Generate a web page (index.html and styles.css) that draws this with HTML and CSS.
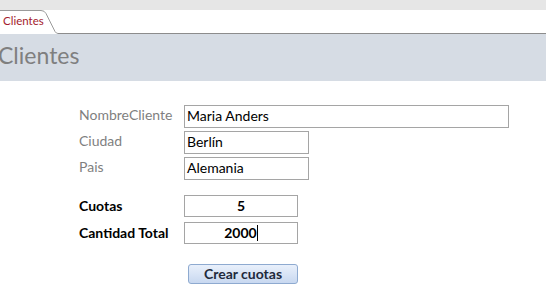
FILE: index.html
```html
<!DOCTYPE html>
<html lang="es">
<head>
    <meta charset="UTF-8">
    <title>Clientes</title>
    <link rel="stylesheet" href="styles.css">
</head>
<body>
    <div class="topbar"></div>

    <div class="tabstrip">
        <div class="tab">
            <svg class="tab-shape" width="58" height="24" viewBox="0 0 58 24">
                <path d="M0 0.5 H41 Q44.5 0.5 46 3.5 L55 21.5 Q56.3 23.5 58 23.5" fill="#fff" stroke="#9a9a9a" stroke-width="1"/>
            </svg>
            <span class="tab-label">Clientes</span>
        </div>
        <div class="tab-rest"></div>
    </div>

    <!-- Form header -->
    <div class="header">
        <h1>Clientes</h1>
    </div>

    <div class="form">
        <div class="row">
            <label class="lbl">NombreCliente</label>
            <div class="field wide">Maria Anders</div>
        </div>
        <div class="row">
            <label class="lbl">Ciudad</label>
            <div class="field mid">Berlín</div>
        </div>
        <div class="row">
            <label class="lbl">Pais</label>
            <div class="field mid">Alemania</div>
        </div>

        <div class="row num first">
            <label class="lbl bold">Cuotas</label>
            <div class="field small center">5</div>
        </div>
        <div class="row num">
            <label class="lbl bold">Cantidad Total</label>
            <div class="field small center">2000<span class="caret"></span></div>
        </div>

        <div class="actions">
            <button class="btn">Crear cuotas</button>
        </div>
    </div>
</body>
</html>
```

FILE: styles.css
```css
body {
    margin: 0;
    font-family: Lato, "Open Sans", sans-serif;
    background: #fff;
    overflow: hidden;
}
.topbar {
    height: 10px;
    background-color: #e6e6e6;
}
.tabstrip {
    display: flex;
    height: 24px;
}
.tab {
    position: relative;
    width: 58px;
    flex: none;
}
.tab-shape {
    position: absolute;
    left: 0;
    top: 0;
}
.tab-label {
    position: relative;
    display: block;
    padding: 4px 0 0 3px;
    font-size: 11.5px;
    color: #a31b2c;
}
.tab-rest {
    flex: 1;
    border-bottom: 1px solid #8c8c8c;
    height: 23px;
}
.header {
    height: 47px;
    background-color: #d6dce4;
}
.header h1 {
    margin: 0 0 0 -2px;
    padding-top: 8px;
    font-size: 23px;
    font-weight: normal;
    color: #7f7f7f;
    line-height: 27px;
}
.form {
    padding: 24px 0 0 79px;
}
.row {
    display: flex;
    align-items: flex-start;
    height: 23px;
    margin-bottom: 3px;
}
.lbl {
    width: 105px;
    flex: none;
    font-size: 14px;
    color: #7f7f7f;
    line-height: 19px;
}
.lbl.bold {
    font-weight: bold;
    color: #000;
    line-height: 21px;
}
.field {
    box-sizing: border-box;
    height: 23px;
    border: 1px solid #a5a5a5;
    font-size: 14px;
    line-height: 20px;
    padding-left: 2px;
    color: #000;
}
.wide { width: 325px; }
.mid { width: 125px; }
.small { width: 114px; }
.row.num {
    height: 21px;
    margin-bottom: 6px;
}
.row.num.first {
    margin-top: 15px;
}
.row.num .field {
    height: 22px;
}
.center {
    text-align: center;
    font-weight: bold;
    padding-left: 0;
}
.caret {
    display: inline-block;
    width: 1px;
    height: 16px;
    background: #000;
    vertical-align: -3px;
}
.actions {
    padding: 14px 0 0 109px;
}
.btn {
    width: 110px;
    height: 20px;
    border: 1px solid #8eaad0;
    border-radius: 3px;
    background: linear-gradient(#e9f0fb, #c8d8f0);
    font-family: Lato, sans-serif;
    font-weight: bold;
    font-size: 14px;
    color: #1f2a3c;
    padding: 0;
}
```
